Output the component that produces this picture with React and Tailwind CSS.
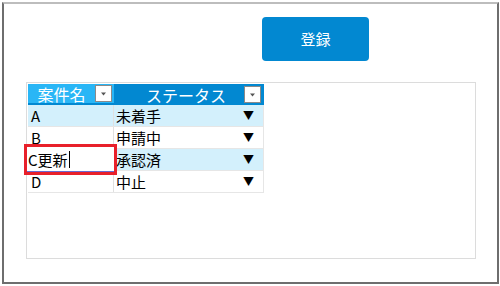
const rows = [
  { id: 'A', status: '未着手', shade: true },
  { id: 'B', status: '申請中', shade: false },
  { id: 'C', status: '承認済', shade: true, editing: true },
  { id: 'D', status: '中止', shade: false },
];

const FilterBox = () => (
  <span className="flex h-[17px] w-[17px] items-center justify-center border border-[#8a8a8a] bg-white">
    <svg width="7" height="4" viewBox="0 0 7 4">
      <path d="M1 0.5h5L3.5 3.5z" fill="#555" />
    </svg>
  </span>
);

const App = () => {
  return (
    <div className="h-[286px] w-[500px] bg-white pl-[2px] pt-[2px] font-['Noto_Sans_CJK_JP','Liberation_Sans',sans-serif]">
      <div className="flex h-[282px] w-[497px] flex-col border-2 border-l-[#6e6e6e] border-r-[#6e6e6e] border-b-[#6e6e6e] border-t-[#bdbdbd]">
        {/* 登録ボタン */}
        <div className="flex pl-[258px] pt-[13px]">
          <button className="flex h-[44px] w-[107px] items-center justify-center rounded-[4px] bg-[#0288d1] text-[15px] text-white">
            登録
          </button>
        </div>

        {/* 一覧パネル */}
        <div className="ml-[22px] mt-[21px] h-[177px] w-[450px] border border-[#dcdcdc] p-px">
          <div className="relative w-[236px] text-[15px] leading-none text-black">
            <div className="flex h-[21px]">
              <div className="flex w-[86px] items-center border-b-2 border-[#0288d1] bg-[#29b6f6] pr-[2px]">
                <span className="flex-1 pt-px text-center text-[16px] text-white">案件名</span>
                <FilterBox />
              </div>
              <div className="flex w-[150px] items-center bg-[#0288d1] pr-[3px]">
                <span className="flex-1 pl-[14px] pt-px text-center text-[16px] text-white">ステータス</span>
                <FilterBox />
              </div>
            </div>
            {rows.map(r => (
              <div
                key={r.id}
                className={`flex h-[22px] border-b border-[#e6e6e6] ${r.shade ? 'bg-[#d3f0fc]' : 'bg-white'}`}
              >
                <div className="flex w-[86px] items-center border-r border-[#e0e0e0] pl-[3px]">
                  {r.editing ? null : r.id}
                </div>
                <div className="flex w-[150px] items-center justify-between border-r border-[#e6e6e6] pl-[2px] pr-[9px]">
                  <span>{r.status}</span>
                  <span className="text-[11px]">▼</span>
                </div>
              </div>
            ))}

            {/* 編集中のセル */}
            <div className="absolute left-[-4px] top-[60px] h-[31px] w-[93px] border-[3px] border-[#e8202a] bg-white">
              <div className="flex h-full items-center border-b border-[#6a6ad0] pl-[1px]">
                <span>C更新</span>
                <span className="ml-px h-[17px] w-px bg-black" />
              </div>
            </div>
          </div>
        </div>
      </div>
    </div>
  );
};

export default App;
